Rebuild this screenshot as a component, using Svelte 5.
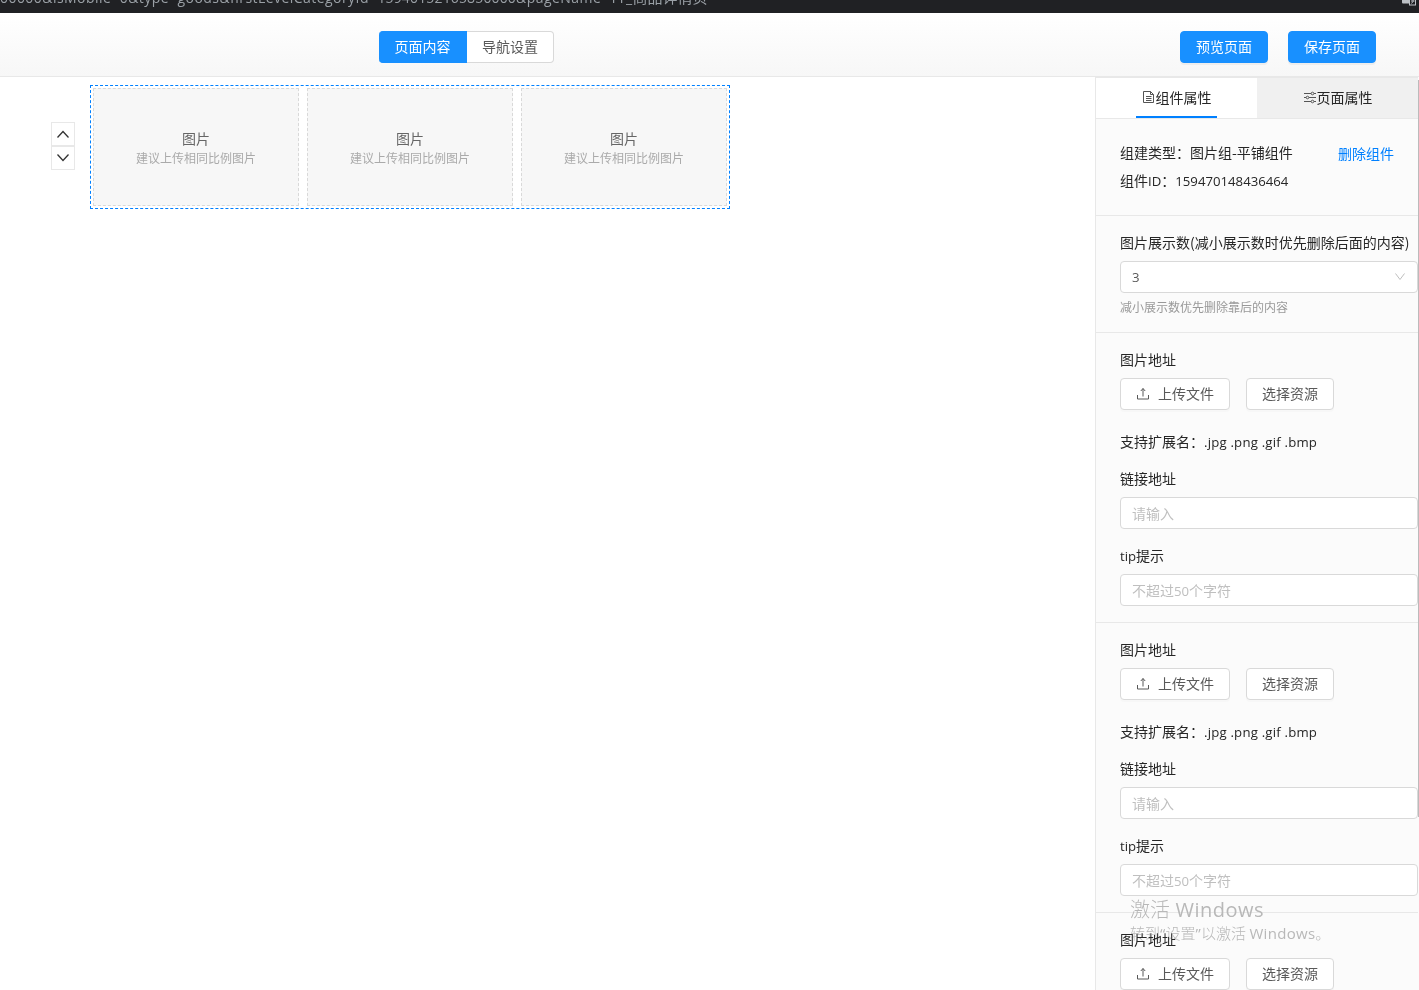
<script lang="ts">
	let activeTab = $state<'component' | 'page'>('component');
	let activeView = $state<'content' | 'nav'>('content');

	const images = [1, 2, 3];
	const componentId = '159470148436464';
</script>

<div class="screen">
	<div class="browser-bar">
		<span class="url"
			>00000&amp;isMobile=0&amp;type=goods&amp;firstLevelCategoryId=<span class="url-id">15940152165850000</span
			>&amp;pageName=TT_<span class="url-name">商品详情页</span></span
		>
		<svg class="translate" width="16" height="13" viewBox="0 0 16 13">
			<rect x="0" y="0" width="9" height="10.5" rx="1" fill="#bdc1c6" />
			<rect x="7.5" y="4.5" width="6" height="7.5" fill="#202124" stroke="#bdc1c6" />
			<path d="M9 8h3.5M11 7v1.5l-1.5 2" fill="none" stroke="#bdc1c6" />
		</svg>
	</div>

	<header class="toolbar">
		<div class="switcher">
			<button class:active={activeView === 'content'} onclick={() => (activeView = 'content')}>页面内容</button>
			<button class:active={activeView === 'nav'} onclick={() => (activeView = 'nav')}>导航设置</button>
		</div>
		<div class="actions">
			<button class="btn primary">预览页面</button>
			<button class="btn primary">保存页面</button>
		</div>
	</header>

	<div class="workspace">
		<main class="canvas">
			<div class="sorter">
				<button aria-label="上移">
					<svg width="14" height="14" viewBox="0 0 14 14"><path d="M1.5 10.5 7 4.500l5.500 6" /></svg>
				</button>
				<button aria-label="下移">
					<svg width="14" height="14" viewBox="0 0 14 14"><path d="M1.500 3.500 7 9.500l5.500-6" /></svg>
				</button>
			</div>
			<div class="image-group">
				{#each images as image (image)}
					<div class="image-slot">
						<strong>图片</strong>
						<span>建议上传相同比例图片</span>
					</div>
				{/each}
			</div>
		</main>

		<aside class="panel">
			<nav class="tabs">
				<button class:active={activeTab === 'component'} onclick={() => (activeTab = 'component')}>
					<span class="tab-label">
						<svg width="14" height="14" viewBox="0 0 14 14">
							<path d="M1.500 1.500h7l3 3v8h-10zM8.500 1.500v3h3M4 6.500h5.500M4 8.500h5.500M4 10.500h5.500" />
						</svg>组件属性
					</span>
				</button>
				<button class:active={activeTab === 'page'} onclick={() => (activeTab = 'page')}>
					<span class="tab-label">
						<svg width="14" height="14" viewBox="0 0 14 14">
							<path d="M1 3.500h7M11 3.500h2M1 7.500h2M6 7.500h7M1 11.500h7M11 11.500h2" />
							<circle cx="9.500" cy="3.500" r="1.300" />
							<circle cx="4.500" cy="7.500" r="1.300" />
							<circle cx="9.500" cy="11.500" r="1.300" />
						</svg>页面属性
					</span>
				</button>
			</nav>

			<section class="summary">
				<div>
					<p>组建类型：图片组-平铺组件</p>
					<p>组件<span class="latin">ID</span>：<span class="latin">{componentId}</span></p>
				</div>
				<button class="link">删除组件</button>
			</section>

			<section class="count">
				<div class="label">图片展示数(减小展示数时优先删除后面的内容)</div>
				<div class="field select">
					<span class="latin">3</span>
					<svg width="12" height="12" viewBox="0 0 12 12"><path d="M1.500 2.500 6 8.500l4.500-6" /></svg>
				</div>
				<div class="hint">减小展示数优先删除靠后的内容</div>
			</section>

			{#each images as image (image)}
				<section class="image-form">
					<div class="label">图片地址</div>
					<div class="buttons">
						<button class="btn">
							<svg width="14" height="14" viewBox="0 0 14 14">
								<path d="M1.500 9v4h11V9M7 10.500V2.500M4.800 5 7 2.500 9.200 5" />
							</svg>
							上传文件
						</button>
						<button class="btn">选择资源</button>
					</div>
					<div class="extensions">支持扩展名：<span class="latin">.jpg .png .gif .bmp</span></div>
					<div class="label">链接地址</div>
					<div class="field placeholder">请输入</div>
					<div class="label tip"><span class="latin">tip</span>提示</div>
					<div class="field placeholder">不超过<span class="latin">50</span>个字符</div>
				</section>
			{/each}
			<div class="scrollbar"></div>
		</aside>
	</div>

	<div class="watermark">
		<div class="watermark-title">激活 <span>Windows</span></div>
		<div class="watermark-text">转到<span>“</span>设置<span>”</span>以激活 <span>Windows</span>。</div>
	</div>
</div>

<style>
	:global(body) {
		background: #fff;
		overflow: hidden;
	}

	.screen {
		position: relative;
		display: flex;
		flex-direction: column;
		width: 1419px;
		height: 990px;
		overflow: hidden;
		font-family: 'Noto Sans CJK SC', sans-serif;
		font-size: 14px;
		font-weight: 400;
		line-height: 20px;
		color: #262626;
	}

	button {
		box-sizing: border-box;
		margin: 0;
		padding: 0;
		border: 0;
		background: none;
		font: inherit;
		color: inherit;
		white-space: nowrap;
	}

	svg {
		flex: none;
		fill: none;
		stroke: currentColor;
	}

	p {
		margin: 0;
	}

	.latin {
		font-family: 'Open Sans', sans-serif;
		font-size: 13.200px;
	}

	.browser-bar {
		position: relative;
		flex: none;
		height: 13px;
		overflow: hidden;
		background: #202124;
		color: #9aa0a6;
	}

	.url {
		position: absolute;
		left: 0;
		top: -13px;
		font-family: 'Open Sans', 'Noto Sans CJK SC', sans-serif;
		letter-spacing: 0.450px;
		line-height: 20px;
		white-space: nowrap;
	}

	.url-id {
		letter-spacing: 0.150px;
	}

	.url-name {
		font-size: 15px;
		letter-spacing: 0;
	}

	.translate {
		position: absolute;
		right: 1px;
		top: -7px;
		stroke: none;
	}

	.toolbar {
		box-sizing: border-box;
		flex: none;
		display: flex;
		justify-content: space-between;
		align-items: flex-start;
		height: 64px;
		padding: 18px 43px 0 379px;
		border-bottom: 1px solid #e8e8e8;
		background: linear-gradient(#fff, #f7f7f7);
	}

	.switcher {
		display: flex;
	}

	.switcher button {
		width: 87px;
		height: 32px;
		padding-bottom: 2px;
		border: 1px solid #d9d9d9;
		border-left: 0;
		border-radius: 0 4px 4px 0;
		background: #fff;
		color: #595959;
	}

	.switcher button:first-child {
		width: 88px;
		border-radius: 4px 0 0 4px;
	}

	.switcher button.active {
		border-color: #1890ff;
		background: #1890ff;
		color: #fff;
	}

	.actions {
		display: flex;
		gap: 20px;
	}

	.btn {
		display: flex;
		align-items: center;
		gap: 8px;
		height: 32px;
		padding: 0 15px 2px;
		border: 1px solid #d9d9d9;
		border-radius: 4px;
		background: #fff;
		box-shadow: 0 2px 0 rgba(0, 0, 0, 0.015);
		color: #595959;
	}

	.btn.primary {
		border-color: #1890ff;
		background: #1890ff;
		box-shadow: 0 2px 0 rgba(0, 0, 0, 0.045);
		color: #fff;
	}

	.workspace {
		flex: 1;
		display: flex;
		min-height: 0;
	}

	.canvas {
		flex: 1;
		display: flex;
		align-items: flex-start;
		gap: 15px;
		padding: 8px 0 0 51px;
	}

	.sorter {
		margin-top: 37px;
	}

	.sorter button {
		display: flex;
		align-items: center;
		justify-content: center;
		width: 24px;
		height: 24px;
		border: 1px solid #e8e8e8;
		background: #fff;
		color: #333;
	}

	.sorter svg {
		stroke-width: 1.300;
	}

	.image-group {
		box-sizing: border-box;
		display: grid;
		grid-template-columns: repeat(3, 206px);
		gap: 8px;
		height: 124px;
		padding: 2px;
		border: 1px dashed #0080ff;
	}

	.image-slot {
		display: flex;
		flex-direction: column;
		align-items: center;
		justify-content: center;
		border: 1px dashed #d9d9d9;
		background: #f7f7f7;
	}

	.image-slot strong {
		font-weight: 400;
		line-height: 20px;
		color: #666;
	}

	.image-slot span {
		margin-bottom: -1px;
		font-size: 12px;
		line-height: 19px;
		color: #aaa;
	}

	.panel {
		position: relative;
		box-sizing: border-box;
		width: 324px;
		border-left: 1px solid #e8e8e8;
		background: #fbfbfb;
	}

	.tabs {
		box-sizing: border-box;
		display: flex;
		height: 42px;
		margin-right: 1px;
		border-top: 1px solid #e8e8e8;
		border-bottom: 1px solid #e8e8e8;
	}

	.tabs button {
		display: flex;
		flex: 1;
		justify-content: center;
		background: #f0f0f0;
	}

	.tabs button.active {
		background: #fff;
	}

	.tab-label {
		box-sizing: border-box;
		display: flex;
		align-items: center;
		justify-content: center;
		width: 81px;
		height: 40px;
		padding-bottom: 2px;
	}

	.tabs .active .tab-label {
		border-bottom: 2px solid #0080ff;
		padding-bottom: 0;
	}

	.tabs svg {
		color: #555;
	}

	section {
		box-sizing: border-box;
		margin-right: 1px;
		padding: 16px 0 0 24px;
		border-bottom: 1px solid #e8e8e8;
	}

	.summary {
		display: flex;
		justify-content: space-between;
		align-items: flex-start;
		height: 97px;
		padding: 23px 24px 0 24px;
	}

	.summary p {
		height: 22px;
		margin-bottom: 6px;
	}

	.link {
		margin-top: 1px;
		color: #0080ff;
	}

	.label {
		height: 22px;
		margin-bottom: 7px;
		white-space: nowrap;
	}

	.count {
		height: 117px;
	}

	.hint {
		margin-top: 4px;
		font-size: 12px;
		color: #999;
	}

	.field {
		box-sizing: border-box;
		width: 298px;
		height: 32px;
		padding: 0 11px;
		border: 1px solid #d9d9d9;
		border-radius: 4px;
		background: #fff;
		line-height: 31px;
	}

	.placeholder {
		color: #bfbfbf;
	}

	.select {
		display: flex;
		justify-content: space-between;
		align-items: center;
		color: #595959;
	}

	.select svg {
		color: #bfbfbf;
	}

	.image-form {
		height: 290px;
	}

	.buttons {
		display: flex;
		gap: 16px;
	}

	.extensions {
		height: 22px;
		margin: 21px 0 15px;
	}

	.extensions .latin {
		letter-spacing: 0.200px;
	}

	.tip {
		margin-top: 16px;
	}

	.scrollbar {
		position: absolute;
		top: 3px;
		right: 0;
		width: 1px;
		height: 737px;
		background: #bbb;
	}

	.watermark {
		position: absolute;
		left: 1130px;
		top: 895px;
		color: #b8b8b8;
		white-space: nowrap;
		mix-blend-mode: darken;
		pointer-events: none;
	}

	.watermark span {
		font-family: 'Open Sans', sans-serif;
		font-weight: 400;
	}

	.watermark-title {
		font-size: 20px;
		font-weight: 300;
		line-height: 28px;
	}

	.watermark-title span {
		margin-left: 1px;
		letter-spacing: 0.500px;
	}

	.watermark-text {
		margin-top: -1px;
		font-size: 15px;
		font-weight: 300;
		line-height: 20px;
	}

	.watermark-text span {
		letter-spacing: 0.300px;
	}
</style>
